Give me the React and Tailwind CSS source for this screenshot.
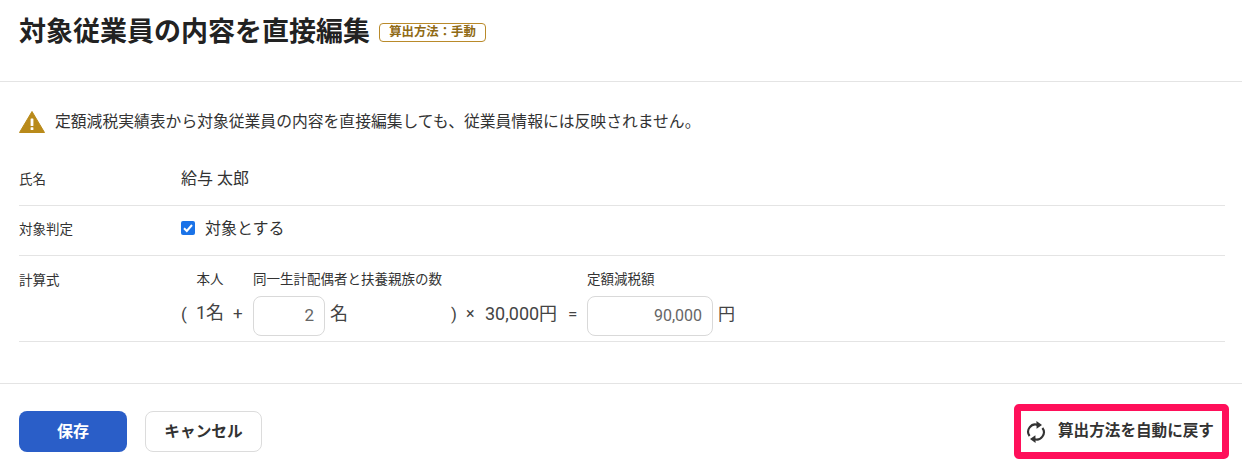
import React from "react";

function Warn() {
  return (
    <svg width="26" height="24" viewBox="0 0 26 24" className="shrink-0">
      <path d="M13 1.5 L25.5 22.5 H0.5 Z" fill="#b98a1a" stroke="#b98a1a" strokeLinejoin="round" />
      <rect x="11.6" y="8.5" width="2.8" height="7.5" rx="0.6" fill="#fff" />
      <rect x="11.6" y="17.2" width="2.8" height="2.8" rx="0.6" fill="#fff" />
    </svg>
  );
}

function Sync() {
  return (
    <svg width="20" height="24" viewBox="0 0 20 24" fill="none" stroke="#333" strokeWidth="2.1">
      <path d="M3.6 16 A7.2 7.2 0 0 1 12 5" />
      <path d="M16.4 8 A7.2 7.2 0 0 1 8 19" />
      <path d="M10.4 1 L16 5 L10.6 8.8 Z" fill="#333" stroke="none" />
      <path d="M9.6 23 L4 19 L9.4 15.2 Z" fill="#333" stroke="none" />
    </svg>
  );
}

export default function App() {
  return (
    <div className="w-[1242px] h-[465px] bg-white text-[#333] overflow-hidden font-['Roboto','Noto_Sans_CJK_JP',sans-serif]">
      <header className="h-[82px] border-b border-[#e4e4e4] pl-[19px] pt-[14px] flex items-start gap-[9px]">
        <h1 className="text-[27px] leading-[36px] font-bold text-[#222] whitespace-nowrap">対象従業員の内容を直接編集</h1>
        <span className="mt-[9px] h-[19px] w-[107px] rounded-[4px] border border-[#b98a2a] text-[#8f6a14] text-[12.4px] font-bold flex items-center justify-center whitespace-nowrap">算出方法：手動</span>
      </header>

      <main className="pl-[19px] pr-[17px] h-[302px] border-b border-[#e4e4e4]">
        <div className="flex items-center gap-[10px] pt-[12px] h-[68px] text-[15.8px] text-[#333]">
          <Warn />
          <span className="whitespace-nowrap">定額減税実績表から対象従業員の内容を直接編集しても、従業員情報には反映されません。</span>
        </div>

        <div className="flex h-[56px] border-b border-[#e4e4e4] pt-[19px]">
          <div className="w-[162px] text-[13.5px] leading-[20px]">氏名</div>
          <div className="text-[16px] leading-[20px]">給与 太郎</div>
        </div>

        <div className="flex h-[50px] border-b border-[#e4e4e4] pt-[13px]">
          <div className="w-[162px] text-[13.5px] leading-[20px]">対象判定</div>
          <label className="flex items-center h-[20px] text-[16px] gap-[10px]">
            <span className="w-[14px] h-[14px] rounded-[2px] bg-[#1a73e8] flex items-center justify-center mb-[2px]">
              <svg width="12" height="12" viewBox="0 0 12 12" fill="none" stroke="#fff" strokeWidth="2"><path d="M2 6.2 L4.8 9 L10 3" /></svg>
            </span>
            対象とする
          </label>
        </div>

        <div className="flex h-[86px] border-b border-[#e4e4e4] pt-[14px] pb-[5px]">
          <div className="w-[162px] text-[13.5px] leading-[20px]">計算式</div>
          <div className="flex items-end text-[#444]">
            <span className="w-[15px] text-[17px] h-[40px] leading-[36px]">(</span>
            <div className="flex flex-col items-center w-[28px] mr-[9px]">
              <span className="text-[13.5px] leading-[20px] text-[#333] mb-[7px] whitespace-nowrap">本人</span>
              <span className="text-[18px] h-[40px] leading-[34px] whitespace-nowrap">1名</span>
            </div>
            <span className="w-[20px] text-[17px] h-[40px] leading-[34px]">+</span>
            <div className="flex flex-col w-[198px]">
              <span className="text-[13.5px] leading-[20px] text-[#333] mb-[7px] whitespace-nowrap">同一生計配偶者と扶養親族の数</span>
              <div className="flex items-center gap-[5px]">
                <div className="w-[72px] h-[40px] rounded-[8px] border border-[#d9d9d9] flex items-center justify-end pr-[10px] text-[17px] text-[#666]">2</div>
                <span className="text-[18px] leading-[36px] mb-[4px] text-[#444]">名</span>
              </div>
            </div>
            <span className="w-[15px] text-[17px] h-[40px] leading-[36px]">)</span>
            <span className="w-[19px] text-[16px] h-[40px] leading-[36px]">×</span>
            <span className="w-[83px] text-[18px] h-[40px] leading-[36px] whitespace-nowrap">30,000円</span>
            <span className="w-[19px] text-[17px] h-[40px] leading-[36px]">=</span>
            <div className="flex flex-col">
              <span className="text-[13.5px] leading-[20px] text-[#333] mb-[7px] whitespace-nowrap">定額減税額</span>
              <div className="flex items-center gap-[5px]">
                <div className="w-[126px] h-[40px] rounded-[8px] border border-[#d9d9d9] flex items-center justify-end pr-[10px] text-[16px] text-[#666]">90,000</div>
                <span className="text-[17px] leading-[36px] mb-[4px] text-[#444]">円</span>
              </div>
            </div>
          </div>
        </div>
      </main>

      <footer className="flex items-start justify-between pl-[19px] pr-[13px] pt-[20px]">
        <div className="flex gap-[18px] pt-[7px]">
          <button className="w-[108px] h-[41px] rounded-[8px] bg-[#2a5ec8] text-white text-[16px] font-bold">保存</button>
          <button className="w-[117px] h-[41px] rounded-[8px] border border-[#dcdcdc] bg-white text-[#333] text-[15.7px] font-bold">キャンセル</button>
        </div>
        <button className="w-[215px] h-[55px] rounded-[5px] border-[7px] border-[#ff0f5a] bg-white flex items-center text-[15.6px] font-bold text-[#333] pl-[5px] gap-[12px]">
          <Sync />
          <span className="whitespace-nowrap">算出方法を自動に戻す</span>
        </button>
      </footer>
    </div>
  );
}
